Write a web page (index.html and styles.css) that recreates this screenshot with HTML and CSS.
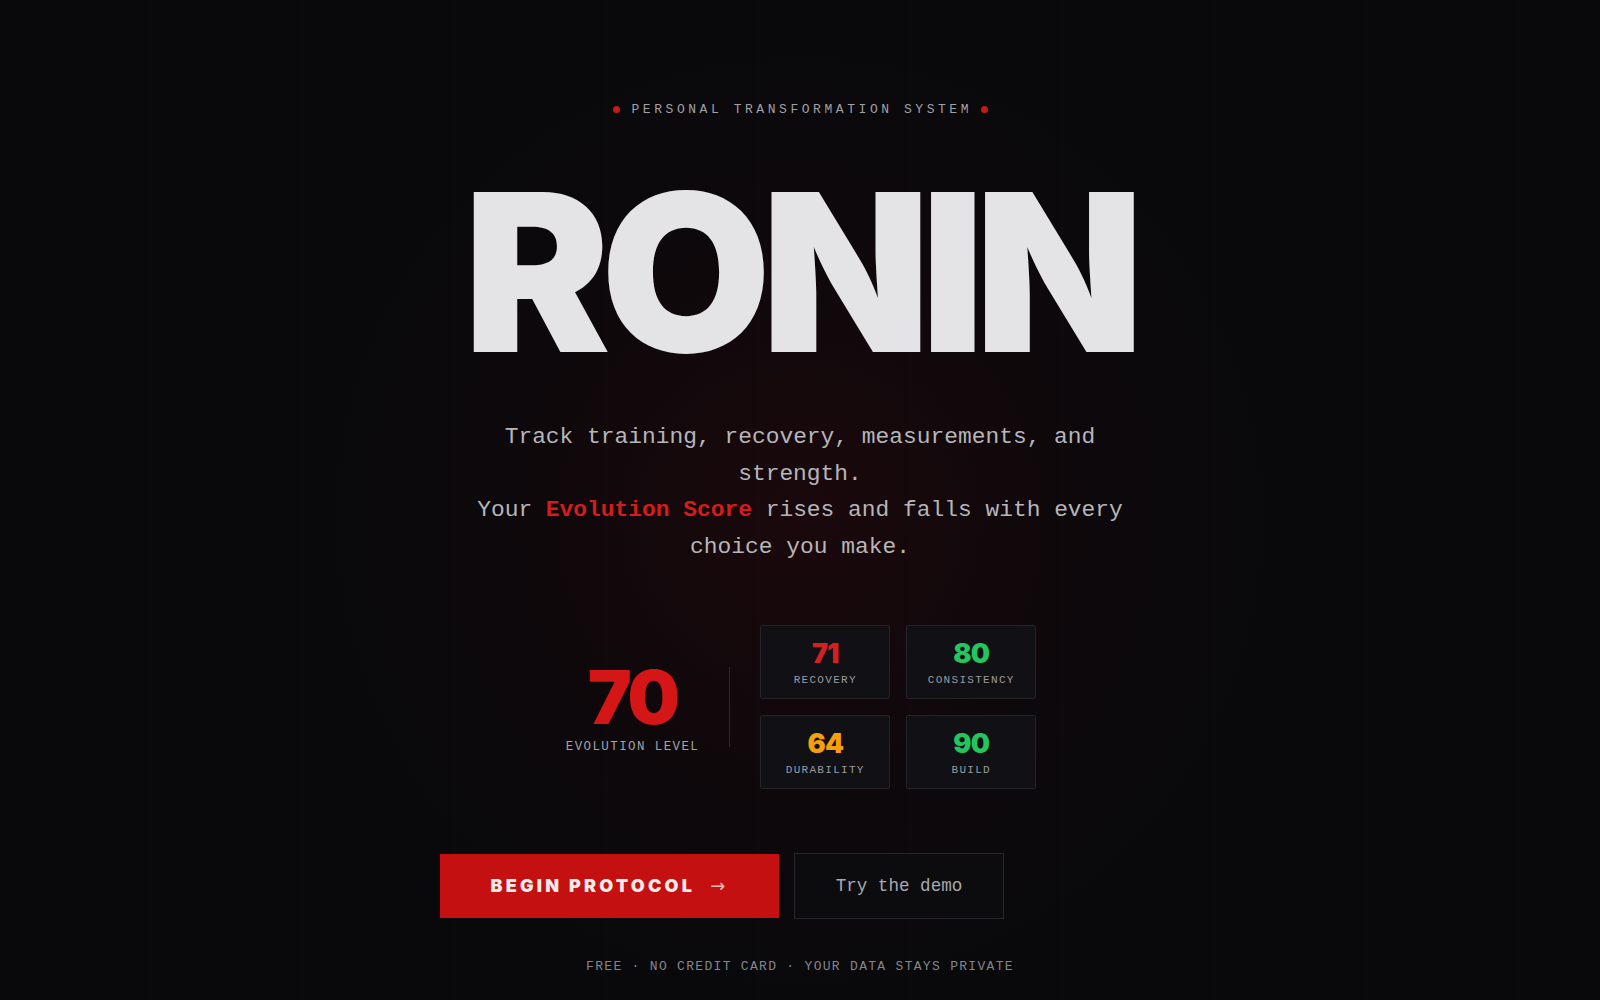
FILE: index.html
```html
<!DOCTYPE html>
<html lang="en">
<head>
<meta charset="utf-8">
<title>RONIN</title>
<link rel="stylesheet" href="styles.css">
</head>
<body>
<main class="hero">
  <div class="eyebrow"><span class="dot"></span><span class="eyebrow-text">PERSONAL TRANSFORMATION SYSTEM</span><span class="dot"></span></div>
  <h1 class="title">RONIN</h1>
  <p class="lead">Track training, recovery, measurements, and strength.<br>Your <span class="hl">Evolution Score</span> rises and falls with every choice you make.</p>
  <section class="stats">
    <div class="level">
      <div class="level-num">70</div>
      <div class="level-label">EVOLUTION LEVEL</div>
    </div>
    <div class="divider"></div>
    <div class="grid">
      <div class="card"><div class="card-num red">71</div><div class="card-label">RECOVERY</div></div>
      <div class="card"><div class="card-num green">80</div><div class="card-label">CONSISTENCY</div></div>
      <div class="card"><div class="card-num amber">64</div><div class="card-label">DURABILITY</div></div>
      <div class="card"><div class="card-num green">90</div><div class="card-label">BUILD</div></div>
    </div>
  </section>
  <div class="actions">
    <a class="btn-primary" href="#">BEGIN PROTOCOL <span class="arrow">→</span></a>
    <a class="btn-ghost" href="#">Try the demo</a>
  </div>
  <p class="fine">FREE · NO CREDIT CARD · YOUR DATA STAYS PRIVATE</p>
</main>
</body>
</html>
```

FILE: styles.css
```css
* { box-sizing: border-box; }
html, body { margin: 0; padding: 0; }
body {
  width: 1600px;
  height: 1000px;
  overflow: hidden;
  background:
    radial-gradient(circle 470px at 800px 520px, rgba(38, 8, 12, 0.6), rgba(22, 6, 9, 0.3) 65%, rgba(0,0,0,0) 100%),
    repeating-linear-gradient(90deg, rgba(255,255,255,0) 0px, rgba(255,255,255,0) 148px, rgba(255,255,255,0.01) 150px, rgba(255,255,255,0) 152px),
    #09090c;
  font-family: "Liberation Mono", "DejaVu Sans Mono", monospace;
  color: #b8b8bc;
}
.hero {
  display: flex;
  flex-direction: column;
  align-items: center;
  padding-top: 101px;
}
.eyebrow {
  display: flex;
  align-items: center;
  gap: 12px;
  height: 16px;
}
.eyebrow-text {
  font-size: 13px;
  letter-spacing: 3.55px;
  color: #a0a0a6;
  margin-right: -3.55px;
}
.dot {
  width: 7px;
  height: 7px;
  border-radius: 50%;
  background: #c81818;
}
.title {
  margin: 45px 0 0;
  font-family: "Inter", "Liberation Sans", sans-serif;
  font-weight: 900;
  font-size: 220px;
  line-height: 220px;
  letter-spacing: -0.045em;
  color: #e4e4e7;
  margin-right: -0.045em;
  position: relative;
  left: -6px;
}
.lead {
  margin: 37px 0 0;
  max-width: 690px;
  text-align: center;
  font-size: 22.9px;
  line-height: 36.7px;
  color: #b6b6ba;
}
.hl {
  color: #d41c1c;
  font-weight: bold;
}
.stats {
  margin-top: 59px;
  display: flex;
  align-items: center;
  gap: 30px;
  margin-left: 2px;
}
.level {
  display: flex;
  flex-direction: column;
  align-items: center;
}
.level-num {
  font-family: "Inter", "Liberation Sans", sans-serif;
  font-weight: 900;
  font-size: 74px;
  line-height: 74px;
  letter-spacing: -0.04em;
  color: #d41616;
}
.level-label {
  margin-top: 6px;
  font-size: 12.5px;
  letter-spacing: 1.4px;
  color: #a2a2a8;
}
.divider {
  width: 1px;
  height: 80px;
  background: #2a2a2e;
}
.grid {
  display: grid;
  grid-template-columns: 130px 130px;
  gap: 16px;
}
.card {
  height: 74px;
  background: #111115;
  border: 1px solid #232328;
  border-radius: 2px;
  display: flex;
  flex-direction: column;
  align-items: center;
  justify-content: center;
  gap: 6px;
  padding-top: 2px;
}
.card-num {
  font-family: "Inter", "Liberation Sans", sans-serif;
  font-weight: 900;
  font-size: 27px;
  line-height: 28px;
  letter-spacing: -0.03em;
}
.card-label {
  font-size: 11px;
  letter-spacing: 1.3px;
  color: #9a9aa0;
}
.red { color: #d42020; }
.green { color: #22c55e; }
.amber { color: #f5a00b; }
.actions {
  margin-top: 64px;
  width: 720px;
  display: flex;
  align-items: center;
  justify-content: flex-start;
  gap: 15px;
}
.btn-primary {
  width: 339px;
  height: 64px;
  display: flex;
  align-items: center;
  justify-content: center;
  background: #c41010;
  color: #f4eaea;
  text-decoration: none;
  font-family: "Inter", "Liberation Sans", sans-serif;
  font-weight: 900;
  font-size: 18px;
  letter-spacing: 3.2px;
}
.arrow {
  font-weight: 400;
  margin-left: 15px;
  color: #f0b8b8;
  font-family: "DejaVu Sans", sans-serif;
}
.btn-ghost {
  width: 210px;
  height: 66px;
  display: flex;
  align-items: center;
  justify-content: center;
  border: 1px solid #26262b;
  background: #0c0c0f;
  color: #a8a8ae;
  text-decoration: none;
  font-size: 17.6px;
}
.fine {
  margin: 40px 0 0;
  font-size: 13px;
  letter-spacing: 1.3px;
  color: #85858b;
}
```
